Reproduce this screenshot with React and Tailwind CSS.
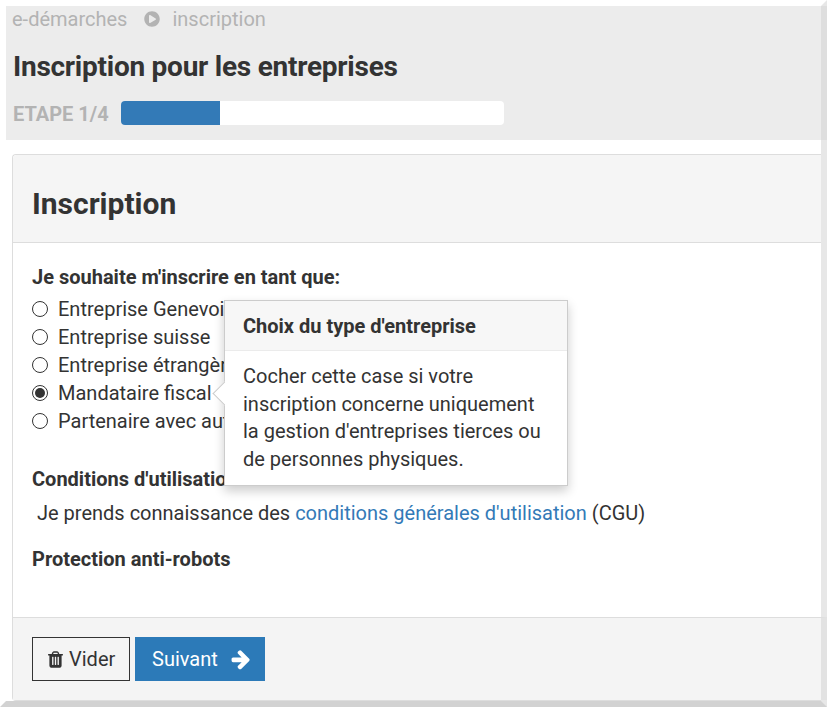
import React from "react";
import { FaPlayCircle } from "react-icons/fa";

const radios = [
  { label: "Entreprise Genevoise" },
  { label: "Entreprise suisse" },
  { label: "Entreprise étrangère" },
  { label: "Mandataire fiscal", checked: true },
  { label: "Partenaire avec autorisation" },
];

function Radio({ label, checked }) {
  return (
    <label className="flex items-center h-7 whitespace-nowrap">
      <span className="w-4 h-4 rounded-full border border-[#333] bg-white flex items-center justify-center mr-[10px]">
        {checked && <span className="w-[10px] h-[10px] rounded-full bg-[#333]"></span>}
      </span>
      {label}
    </label>
  );
}

function TrashIcon() {
  return (
    <svg width="19" height="19" viewBox="0 0 1792 1792" fill="currentColor">
      <path d="M704 1376v-704q0-14-9-23t-23-9h-64q-14 0-23 9t-9 23v704q0 14 9 23t23 9h64q14 0 23-9t9-23zm256 0v-704q0-14-9-23t-23-9h-64q-14 0-23 9t-9 23v704q0 14 9 23t23 9h64q14 0 23-9t9-23zm256 0v-704q0-14-9-23t-23-9h-64q-14 0-23 9t-9 23v704q0 14 9 23t23 9h64q14 0 23-9t9-23zm-544-992h448l-48-117q-7-9-17-11h-317q-10 2-17 11zm928 32v64q0 14-9 23t-23 9h-96v948q0 83-47 143.500t-113 60.500h-832q-66 0-113-58.500t-47-141.500v-952h-96q-14 0-23-9t-9-23v-64q0-14 9-23t23-9h309l70-167q15-37 54-63t79-26h320q40 0 79 26t54 63l70 167h309q14 0 23 9t9 23z" />
    </svg>
  );
}

function ArrowIcon() {
  return (
    <svg width="22" height="22" viewBox="0 0 1792 1792" fill="currentColor">
      <path d="M1600 960q0 54-37 91l-651 651q-39 37-91 37-51 0-90-37l-75-75q-38-38-38-91t38-91l293-293h-704q-52 0-84.500-37.500t-32.500-90.500v-128q0-53 32.500-90.500t84.500-37.500h704l-293-294q-38-36-38-90t38-90l75-75q38-38 90-38 53 0 91 38l651 651q37 35 37 90z" />
    </svg>
  );
}

export default function App() {
  return (
    <div className="w-[827px] h-[707px] bg-white border-[6px] border-t-white border-l-white border-r-[#e7e7e7] border-b-[#d2d2d2] font-['Roboto',sans-serif] text-[20px] leading-7 text-[#333]">
      <div className="h-[134px] -mr-[6px] bg-[#ececec] border-r-[6px] border-r-[#dedede] pl-[6px]">
        <div className="flex items-center h-7 -translate-y-[1px] text-[#b3b3b3]">
          <span>e-démarches</span>
          <FaPlayCircle className="ml-[17px] mr-[12px] text-[16px]" />
          <span>inscription</span>
        </div>
        <h1 className="mt-[14px] ml-[1px] text-[28px] leading-[38px] font-bold tracking-[-0.25px]">
          Inscription pour les entreprises
        </h1>
        <div className="flex items-center mt-[13px] ml-[1px]">
          <span className="w-[108px] font-bold text-[#b3b3b3] translate-y-[1px]">ETAPE 1/4</span>
          <div className="w-[383px] h-6 bg-white rounded overflow-hidden">
            <div className="w-[99px] h-6 bg-[#337ab7]"></div>
          </div>
        </div>
      </div>

      <div className="relative mt-[14px] ml-[6px] h-[547px] flex flex-col border border-r-0 border-[#ddd] rounded-tl rounded-bl">
        <div className="h-[88px] shrink-0 bg-[#f5f5f5] border-b border-[#ddd] rounded-tl pl-[19px] pt-[11px] flex items-center">
          <h2 className="text-[30px] font-bold leading-9">Inscription</h2>
        </div>

        <div className="flex-1 bg-white pl-[19px] pt-5">
          <p className="font-bold">Je souhaite m'inscrire en tant que:</p>
          <div className="mt-[4px]">
            {radios.map((r) => (
              <Radio key={r.label} label={r.label} checked={r.checked} />
            ))}
          </div>
          <p className="mt-[30px] font-bold">Conditions d'utilisation</p>
          <p className="mt-[6px] pl-[5px]">
            Je prends connaissance des{" "}
            <a href="#" className="text-[#337ab7]">conditions générales d'utilisation</a> (CGU)
          </p>
          <p className="mt-[18px] font-bold">Protection anti-robots</p>
        </div>

        <div className="h-[83px] shrink-0 -mr-[6px] bg-[#f4f4f4] border-t border-t-[#ddd] border-r-[6px] border-r-[#e2e2e2] pl-[19px] pt-[19px] flex gap-[5px] items-start">
          <button className="w-[98px] h-11 border border-[#333] flex items-center pl-[13px] gap-[4px]">
            <TrashIcon />
            Vider
          </button>
          <button className="w-[130px] h-11 bg-[#2c7ab8] text-white flex items-center pl-[17px] gap-[12px]">
            Suivant
            <ArrowIcon />
          </button>
        </div>

        <div className="absolute left-[211px] top-[145px] w-[344px] h-[186px] bg-white border border-[#ccc] shadow-[0_5px_10px_rgba(0,0,0,0.2)]">
          <div className="absolute -left-[9px] top-[84px] w-[17px] h-[17px] rotate-45 bg-white border-l border-b border-[#ccc]"></div>
          <div className="relative h-[50px] bg-[#f7f7f7] border-b border-[#ebebeb] pl-[18px] flex items-center font-bold">
            Choix du type d'entreprise
          </div>
          <p className="relative bg-white pl-[18px] pt-[12px] pr-[18px] leading-[27.5px]">
            Cocher cette case si votre inscription concerne uniquement la gestion d'entreprises tierces ou de personnes physiques.
          </p>
        </div>
      </div>
    </div>
  );
}
